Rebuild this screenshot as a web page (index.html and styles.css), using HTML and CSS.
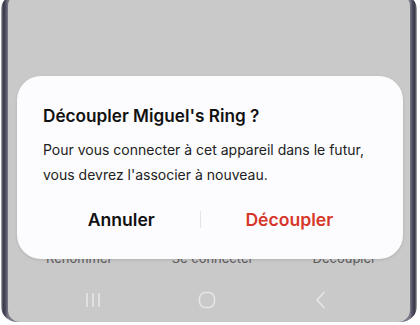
FILE: index.html
```html
<!DOCTYPE html>
<html lang="fr">
<head>
<meta charset="utf-8">
<link rel="stylesheet" href="styles.css">
</head>
<body>
<div class="device">
  <div class="screen">
    <div class="spacer"></div>
    <div class="actions">
      <span class="action">Renommer</span>
      <span class="action">Se connecter</span>
      <span class="action">Découpler</span>
    </div>
    <div class="nav">
      <svg class="nav-icon" width="18" height="18" viewBox="0 0 18 18"><path d="M3 2v14M9 2v14M15 2v14" stroke="#e6e6e6" stroke-width="1.6" fill="none"/></svg>
      <svg class="nav-icon" width="18" height="18" viewBox="0 0 18 18"><rect x="1.5" y="1.5" width="15" height="15" rx="6" stroke="#e6e6e6" stroke-width="1.6" fill="none"/></svg>
      <svg class="nav-icon" width="18" height="18" viewBox="0 0 18 18"><path d="M12 1.5L5 9l7 7.5" stroke="#e6e6e6" stroke-width="1.6" fill="none" stroke-linecap="round" stroke-linejoin="round"/></svg>
    </div>
    <div class="dialog">
      <div class="title">Découpler Miguel's Ring ?</div>
      <div class="message">Pour vous connecter à cet appareil dans le futur, vous devrez l'associer à nouveau.</div>
      <div class="buttons">
        <span class="btn">Annuler</span>
        <span class="divider"></span>
        <span class="btn danger">Découpler</span>
      </div>
    </div>
  </div>
</div>
</body>
</html>
```
FILE: styles.css
```css
html, body {
  margin: 0;
  padding: 0;
  background: #ffffff;
}
body {
  font-family: Inter, Roboto, "Noto Sans", sans-serif;
  width: 420px;
  height: 325px;
  overflow: hidden;
}
.device {
  margin: -6px 3px 0 1px;
  height: 328px;
  background: linear-gradient(90deg, #b8b8be 0px, #3a3946 2px, #44435a 4px, #7a7986 7px, #7a7986 calc(100% - 7px), #44435a calc(100% - 4px), #3a3946 calc(100% - 2px), #b8b8be 100%);
  border-radius: 16px;
  padding: 0 7px;
  box-sizing: border-box;
}
.screen {
  position: relative;
  height: 100%;
  background: #c9c9c9;
  border-radius: 12px;
  display: flex;
  flex-direction: column;
  overflow: hidden;
}
.spacer {
  height: 256px;
}
.actions {
  display: flex;
  justify-content: space-between;
  padding: 0 34px 0 38px;
  font-size: 13px;
  color: #5c5c5c;
  line-height: 16px;
}
.nav {
  display: flex;
  justify-content: space-between;
  padding: 25px 80px 0 76px;
}
.nav-icon {
  display: block;
}
.dialog {
  position: absolute;
  top: 82px;
  left: 9px;
  width: 386px;
  height: 183px;
  background: #fcfcfe;
  border-radius: 24px;
  box-sizing: border-box;
  padding: 28px 25px 0 26px;
  box-shadow: 0 1px 3px rgba(0,0,0,0.12);
}
.title {
  font-size: 17.2px;
  font-weight: 600;
  color: #111111;
  line-height: 24px;
}
.message {
  margin-top: 9px;
  font-size: 14px;
  color: #222222;
  line-height: 25px;
}
.buttons {
  display: flex;
  align-items: center;
  margin-top: 15px;
  height: 34px;
}
.btn {
  flex: 1 1 auto;
  text-align: center;
  font-size: 17.6px;
  font-weight: 600;
  color: #111111;
}
.btn.danger {
  color: #d7362b;
}
.divider {
  width: 1px;
  height: 17px;
  background: #e4e4e8;
}
```
